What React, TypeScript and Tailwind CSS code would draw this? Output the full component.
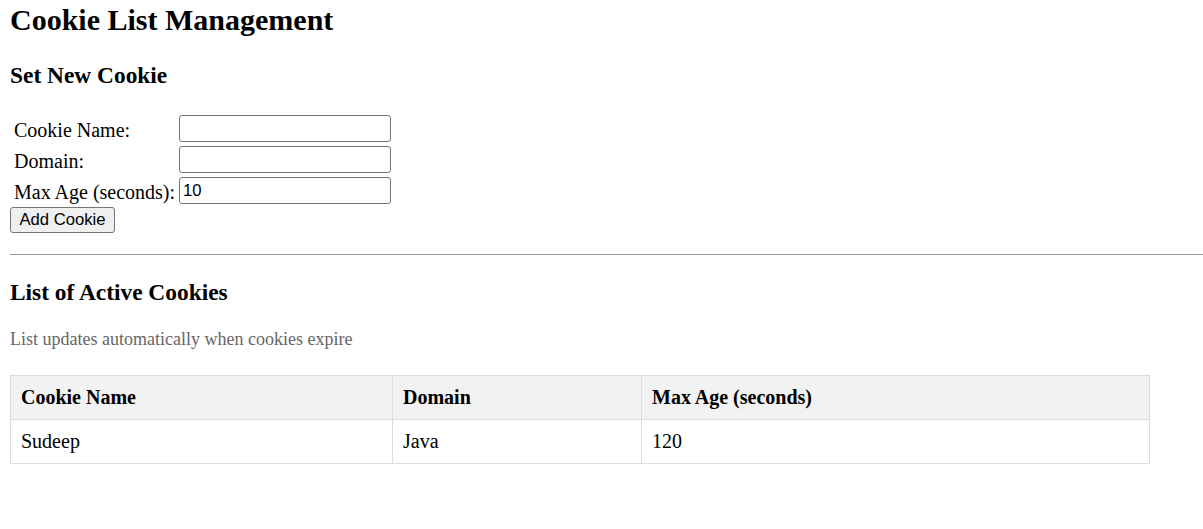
import { useState } from "react";

type Cookie = { name: string; domain: string; maxAge: number };

function App() {
  const [name, setName] = useState("");
  const [domain, setDomain] = useState("");
  const [maxAge, setMaxAge] = useState("10");
  const [cookies, setCookies] = useState<Cookie[]>([
    { name: "Sudeep", domain: "Java", maxAge: 120 },
  ]);

  const addCookie = () => {
    if (!name) return;
    setCookies([...cookies, { name, domain, maxAge: Number(maxAge) }]);
    setName("");
    setDomain("");
  };

  const inputClass =
    "w-[212px] h-[27px] border border-[#767676] rounded-[3px] px-[3px] bg-white text-[16.67px] font-['Liberation_Sans',Arial,sans-serif] outline-none";

  return (
    <div className="min-h-screen bg-white pl-[10px] pt-[3px] text-black font-['Liberation_Serif','Times_New_Roman',serif]">
      <h1 className="text-[30px] font-bold leading-[34px]">Cookie List Management</h1>

      {/* Form section */}
      <h3 className="mt-[25px] text-[23.4px] font-bold leading-[27px]">Set New Cookie</h3>

      <div className="mt-[26px] grid grid-cols-[165px_212px] gap-y-[4px] pl-[4px] text-[20px] leading-[22px]">
        <label className="flex items-center pt-[2px]">Cookie Name:</label>
        <input className={inputClass} value={name} onChange={(e) => setName(e.target.value)} />
        <label className="flex items-center pt-[2px]">Domain:</label>
        <input className={inputClass} value={domain} onChange={(e) => setDomain(e.target.value)} />
        <label className="flex items-center pt-[2px]">Max Age (seconds):</label>
        <input className={inputClass} value={maxAge} onChange={(e) => setMaxAge(e.target.value)} />
      </div>

      <button
        onClick={addCookie}
        className="mt-[3px] block w-[105px] h-[26px] bg-[#efefef] border border-[#767676] rounded-[3px] text-[16.67px] leading-[20px] font-['Liberation_Sans',Arial,sans-serif]"
      >
        Add Cookie
      </button>

      <hr className="mt-[21px] border-0 border-t border-[#9a9a9a]" />

      {/* Cookie list */}
      <h3 className="mt-[24px] text-[23.4px] font-bold leading-[27px]">List of Active Cookies</h3>
      <p className="mt-[23px] text-[18px] leading-[21px] text-[#666]">
        List updates automatically when cookies expire
      </p>

      <table className="mt-[25px] w-[1140px] border-collapse text-[20px] leading-[23px]">
        <thead>
          <tr className="bg-[#f2f2f2]">
            <th className="w-[382px] border border-[#ddd] px-[10px] py-[10px] text-left font-bold">Cookie Name</th>
            <th className="w-[249px] border border-[#ddd] px-[10px] py-[10px] text-left font-bold">Domain</th>
            <th className="border border-[#ddd] px-[10px] py-[10px] text-left font-bold">Max Age (seconds)</th>
          </tr>
        </thead>
        <tbody>
          {cookies.map((c) => (
            <tr key={c.name}>
              <td className="border border-[#ddd] px-[10px] py-[10px]">{c.name}</td>
              <td className="border border-[#ddd] px-[10px] py-[10px]">{c.domain}</td>
              <td className="border border-[#ddd] px-[10px] py-[10px]">{c.maxAge}</td>
            </tr>
          ))}
        </tbody>
      </table>
    </div>
  );
}

export default App;
